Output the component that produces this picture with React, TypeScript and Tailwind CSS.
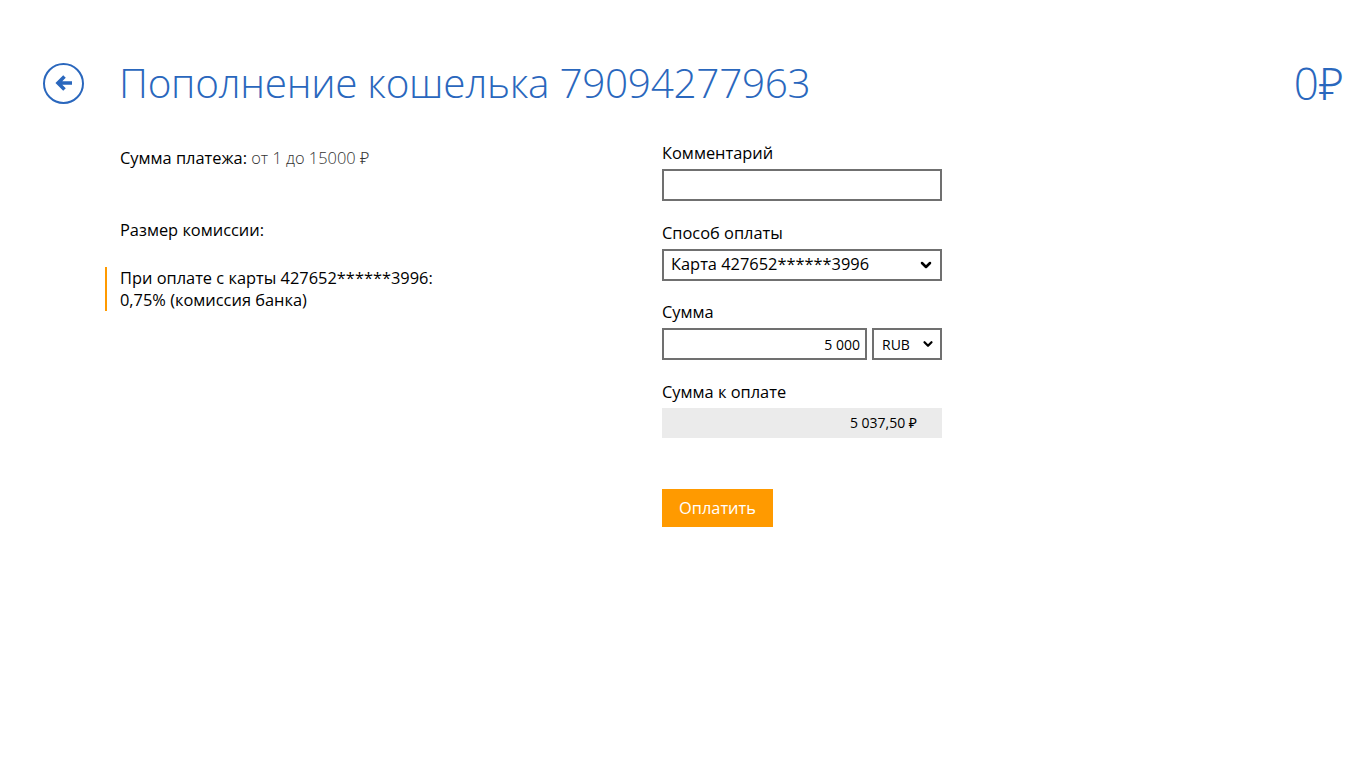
import { ChevronDown } from 'lucide-react';

function Field({ label, children }: { label: string; children: React.ReactNode }) {
  return (
    <div>
      <div className="text-[16.4px] leading-[20px] text-black mb-[6px]">{label}</div>
      {children}
    </div>
  );
}

export default function App() {
  return (
    <div className="w-[1366px] h-[768px] bg-white relative overflow-hidden" style={{ fontFamily: '"Open Sans", "Noto Sans", sans-serif' }}>
      {/* Header */}
      <div className="flex items-center pt-[61px] pl-[43px] pr-[22px]">
        <button className="w-[41px] h-[41px] rounded-full border-2 border-[#2a67bd] flex items-center justify-center text-[#2a67bd]">
          <svg viewBox="0 0 24 24" className="w-[24px] h-[24px]" fill="none" stroke="currentColor" strokeWidth={3.6} strokeLinecap="butt" strokeLinejoin="miter">
            <path d="M20 12H7M12.5 5.5 6 12l6.5 6.5" />
          </svg>
        </button>
        <h1 className="ml-[35px] text-[40.5px] leading-[44px] font-light text-[#2a67bd] tracking-[-0.3px]">
          Пополнение кошелька 79094277963
        </h1>
        <div className="ml-auto text-[44px] leading-[44px] font-light text-[#2a67bd]">0₽</div>
      </div>

      <div className="flex pt-[18px]">
        {/* Left column */}
        <div className="w-[662px] shrink-0 pl-[120px]">
          <div className="pt-[25px] text-[16.4px] leading-[20px] text-black">
            Сумма платежа: <span className="text-[#333] font-light">от 1 до 15000 ₽</span>
          </div>
          <div className="mt-[52px] text-[16.4px] leading-[20px] text-black">Размер комиссии:</div>
          <div className="mt-[27px] -ml-[15px] border-l-2 border-[#ff9a00] pl-[13px] text-[16.4px] leading-[22px] text-black">
            <div>При оплате с карты 427652******3996:</div>
            <div>0,75% (комиссия банка)</div>
          </div>
        </div>

        {/* Right column */}
        <div className="w-[280px] flex flex-col gap-[21.5px] pt-[20px]">
          <Field label="Комментарий">
            <div className="h-[32px] border-2 border-[#707070] bg-white" />
          </Field>
          <Field label="Способ оплаты">
            <div className="h-[32px] border-2 border-[#707070] flex items-center justify-between pl-[7px] pr-[6px] text-[16.4px] text-black">
              <span>Карта 427652******3996</span>
              <ChevronDown className="w-[16px] h-[16px]" strokeWidth={3.8} />
            </div>
          </Field>
          <Field label="Сумма">
            <div className="flex gap-[5px]">
              <div className="flex-1 h-[32px] border-2 border-[#707070] flex items-center justify-end pr-[5px] text-[14px] text-black">
                5 000
              </div>
              <div className="w-[70px] h-[32px] border-2 border-[#707070] flex items-center justify-between pl-[8px] pr-[5px] text-[14px] text-black">
                <span>RUB</span>
                <ChevronDown className="w-[14px] h-[14px]" strokeWidth={3.8} />
              </div>
            </div>
          </Field>
          <Field label="Сумма к оплате">
            <div className="h-[30px] bg-[#ebebeb] flex items-center justify-end pr-[25px] text-[14px] text-black">
              5 037,50 ₽
            </div>
          </Field>
          <div className="pt-[30px]">
            <button className="h-[38px] px-[17px] bg-[#ff9a00] text-white text-[16.4px]">Оплатить</button>
          </div>
        </div>
      </div>
    </div>
  );
}
